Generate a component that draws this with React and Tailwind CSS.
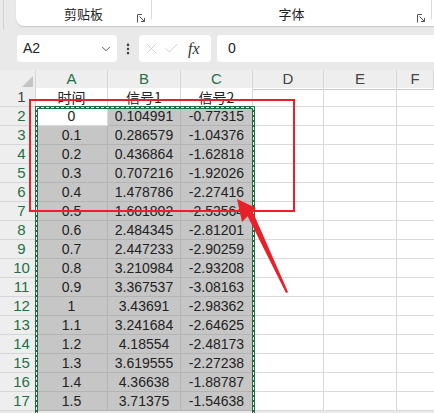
import React from 'react';
import { ChevronDown, EllipsisVertical, X, Check } from 'lucide-react';

const rows = [
  ['时间', '信号1', '信号2'],
  ['0', '0.104991', '-0.77315'],
  ['0.1', '0.286579', '-1.04376'],
  ['0.2', '0.436864', '-1.62818'],
  ['0.3', '0.707216', '-1.92026'],
  ['0.4', '1.478786', '-2.27416'],
  ['0.5', '1.601802', '-2.53564'],
  ['0.6', '2.484345', '-2.81201'],
  ['0.7', '2.447233', '-2.90259'],
  ['0.8', '3.210984', '-2.93208'],
  ['0.9', '3.367537', '-3.08163'],
  ['1', '3.43691', '-2.98362'],
  ['1.1', '3.241684', '-2.64625'],
  ['1.2', '4.18554', '-2.48173'],
  ['1.3', '3.619555', '-2.27238'],
  ['1.4', '4.36638', '-1.88787'],
  ['1.5', '3.71375', '-1.54638'],
];

const cols = ['A', 'B', 'C', 'D', 'E', 'F'];

// 리본 그룹 우측 하단 런처 아이콘
const Launcher = () => (
  <svg width="9" height="9" viewBox="0 0 9 9" className="text-[#555]">
    <path d="M0.5 8.5V0.5H5" fill="none" stroke="currentColor" strokeWidth="1" />
    <path d="M2.5 2.5L7.5 7.5M4 7.5H7.5V4" fill="none" stroke="currentColor" strokeWidth="1" />
  </svg>
);

export default function App() {
  return (
    <div className="relative w-[434px] h-[413px] overflow-hidden bg-[#e9e9e9] font-['Liberation_Sans','Noto_Sans_CJK_SC',sans-serif] text-[#222]">
      {/* 리본 */}
      <div className="flex h-[26px]">
        <div className="w-[16px] shrink-0 relative">
          <div className="absolute left-[3px] top-0 h-[30px] w-px bg-[#d2d2d2]"></div>
        </div>
        <div className="flex-1 flex bg-white rounded-bl-[8px] shadow-[0_1px_1px_rgba(0,0,0,0.15)]">
          <div className="w-[136px] relative flex items-start justify-center pt-[6px] text-[13px] font-['Noto_Sans_CJK_SC',sans-serif] leading-[16px] border-r border-[#dcdcdc] mb-[6px]">
            剪贴板
            <div className="absolute right-[5px] bottom-[-3px]"><Launcher /></div>
          </div>
          <div className="w-[280px] relative flex items-start justify-center pt-[6px] text-[13px] font-['Noto_Sans_CJK_SC',sans-serif] leading-[16px] border-r border-[#dcdcdc] mb-[6px]">
            字体
            <div className="absolute right-[5px] bottom-[-3px]"><Launcher /></div>
          </div>
        </div>
      </div>

      {/* 수식 입력줄 */}
      <div className="h-[44px] flex items-start pt-[9px] pl-[17px]">
        <div className="w-[100px] h-[27px] bg-white rounded-[4px] flex items-center justify-between pl-[6px] pr-[4px] text-[14px]">
          <span>A2</span>
          <ChevronDown size={14} strokeWidth={1.6} className="text-[#444]" />
        </div>
        <div className="w-[22px] h-[27px] flex items-center justify-center">
          <EllipsisVertical size={14} strokeWidth={2.5} className="text-[#444]" />
        </div>
        <div className="w-[72px] h-[27px] bg-white rounded-[4px] flex items-center pl-[4px] gap-[3px]">
          <X size={17} strokeWidth={1} className="text-[#bdbdbd]" />
          <Check size={17} strokeWidth={1} className="text-[#bdbdbd]" />
          <span className="ml-[5px] font-['Liberation_Serif',serif] italic text-[16px] text-[#333]">fx</span>
        </div>
        <div className="flex-1 ml-[6px] h-[27px] bg-white rounded-l-[4px] flex items-center pl-[11px] text-[14px]">0</div>
      </div>

      {/* 시트 */}
      <div className="relative bg-white">
        <div className="grid grid-cols-[36px_72px_73px_72px_71px_73px_1fr] h-[18px] bg-[#eeeeee] text-[15px] leading-[18px]">
          <div className="relative border-r border-[#d6d6d6]">
            <div className="absolute right-[2px] bottom-[3px] w-0 h-0 border-l-[11px] border-l-transparent border-b-[11px] border-b-[#c4c4c4]"></div>
          </div>
          {cols.map((c, i) => (
            <div
              key={c}
              className={i < 3
                ? 'text-center text-[#1e7145] border-r border-[#d6d6d6] border-b-2 border-b-[#1e7145]'
                : 'text-center text-[#444] border-r border-[#d6d6d6] border-b border-b-[#c6c6c6]'}
            >
              {c}
            </div>
          ))}
        </div>

        {rows.map((r, ri) => {
          const sel = ri > 0;
          return (
            <div key={ri} className="grid grid-cols-[36px_72px_73px_72px_71px_73px_1fr] h-[19px] text-[14px] leading-[18px]">
              <div className={`bg-[#eeeeee] pl-2 text-center text-[15px] border-b border-r border-[#d6d6d6] ${sel ? 'text-[#1e7145]' : 'text-[#444]'}`}>
                {ri + 1}
              </div>
              {r.map((v, ci) => {
                const active = ri === 1 && ci === 0;
                const bg = sel && !active ? 'bg-[#c6c6c6] border-[#b4b4b4]' : 'bg-white border-[#dadada]';
                return (
                  <div
                    key={ci}
                    className={`text-center border-b border-r ${bg} ${ri === 0 ? "font-['Noto_Sans_CJK_SC',sans-serif] text-[14px]" : ''}`}
                  >
                    {v}
                  </div>
                );
              })}
              <div className="border-b border-r border-[#dadada]"></div>
              <div className="border-b border-r border-[#dadada]"></div>
              <div className="border-b border-[#dadada]"></div>
            </div>
          );
        })}

        {/* 복사 영역 점선 */}
        <div className="absolute left-[35px] top-[36px] w-[220px] h-[340px] border-[3px] border-[#1e6e42]">
          <div className="absolute -inset-[2px] border border-dashed border-white"></div>
        </div>

        {/* 빨간 박스 */}
        <div className="absolute left-[29px] top-[29px] w-[266px] h-[113px] border-2 border-[#e8202a]"></div>

        {/* 빨간 화살표 */}
        <svg className="absolute left-0 top-0" width="434" height="343" viewBox="0 70 434 343">
          <polygon points="237,199 242,222 256,208" fill="#e8202a" />
          <polygon points="246,213 252,210 288,292 286,293" fill="#e8202a" />
        </svg>
      </div>
    </div>
  );
}
